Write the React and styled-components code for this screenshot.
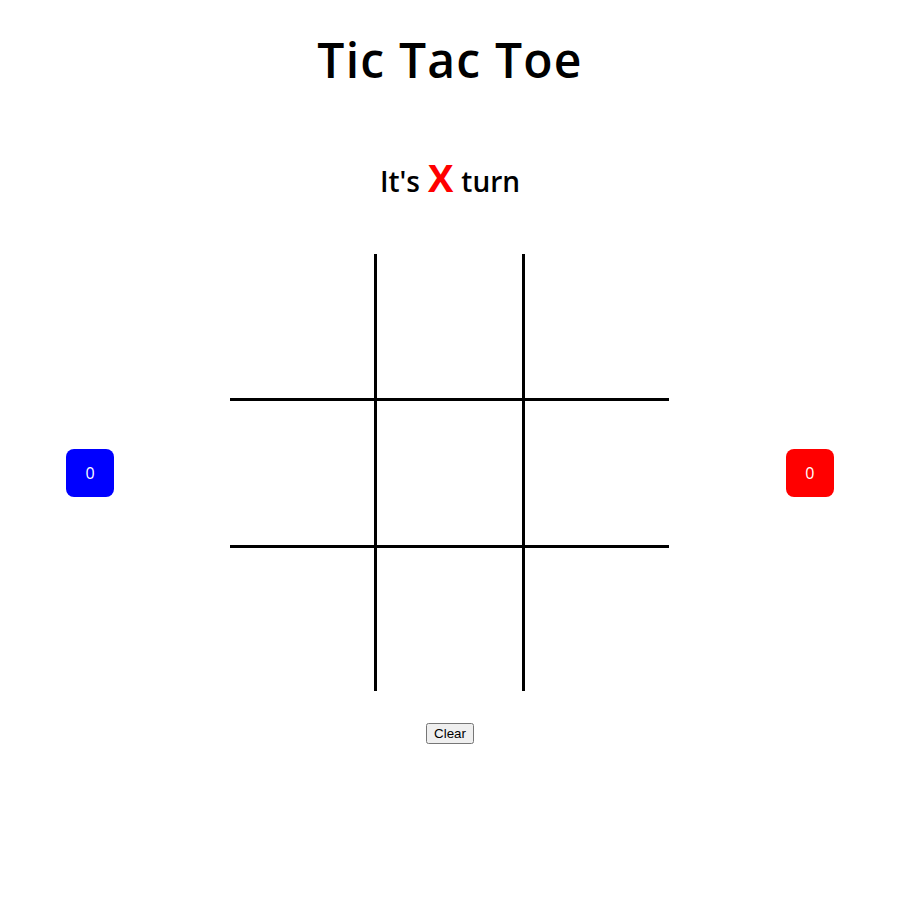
import React, { useState } from 'react'
import styled, { createGlobalStyle } from 'styled-components'

const GlobalStyle = createGlobalStyle`
    body {
        margin: 8px;
        background: #fff;
        font-family: "Open Sans", "DejaVu Sans", sans-serif;
    }
`

const Page = styled.div`
    display: flex;
    flex-direction: column;
    align-items: center;
`

const Title = styled.h1`
    font-size: 48px;
    font-weight: 600;
    line-height: 56px;
    margin: 24px 0 0;
    letter-spacing: 1.2px;
`

const Turn = styled.h2`
    font-size: 28px;
    font-weight: 600;
    line-height: 40px;
    margin: 69px 0 0;
    display: flex;
    align-items: baseline;
    gap: 8px;
`

const Mark = styled.span`
    color: ${props => props.color};
    font-size: 38px;
    font-weight: 700;
`

const Row = styled.div`
    align-self: stretch;
    display: flex;
    justify-content: space-around;
    align-items: center;
    margin-top: 53px;
`

const Score = styled.div`
    width: 48px;
    height: 48px;
    border-radius: 8px;
    background: ${props => props.bg};
    color: #fff;
    display: flex;
    justify-content: center;
    align-items: center;
    font-size: 16px;
`

const Board = styled.div`
    display: grid;
    grid-template-columns: 147px 148px 144px;
    grid-template-rows: 147px 147px 143px;
    width: 439px;
`

const Cell = styled.div`
    box-sizing: border-box;
    border-right: ${props => props.right ? '3px solid #000' : 'none'};
    border-bottom: ${props => props.bottom ? '3px solid #000' : 'none'};
    display: flex;
    justify-content: center;
    align-items: center;
    font-size: 80px;
    cursor: pointer;
`

const ClearButton = styled.button`
    margin-top: 32px;
    font-family: "Liberation Sans", Arial, sans-serif;
    font-size: 13.33px;
`

export default function App() {
    const [cells, setCells] = useState(Array(9).fill(''))
    const [turn, setTurn] = useState('X')

    const play = i => {
        if (cells[i]) return
        const next = [...cells]
        next[i] = turn
        setCells(next)
        setTurn(turn === 'X' ? 'O' : 'X')
    }

    return (
        <Page>
            <GlobalStyle />
            <Title>Tic Tac Toe</Title>
            <Turn>
                It's <Mark color={turn === 'X' ? 'red' : 'blue'}>{turn}</Mark> turn
            </Turn>
            <Row>
                <Score bg="blue">0</Score>
                <Board>
                    {cells.map((c, i) => (
                        <Cell
                            key={i}
                            right={i % 3 !== 2}
                            bottom={i < 6}
                            onClick={() => play(i)}
                        >
                            {c}
                        </Cell>
                    ))}
                </Board>
                <Score bg="red">0</Score>
            </Row>
            <ClearButton onClick={() => { setCells(Array(9).fill('')); setTurn('X') }}>
                Clear
            </ClearButton>
        </Page>
    )
}
